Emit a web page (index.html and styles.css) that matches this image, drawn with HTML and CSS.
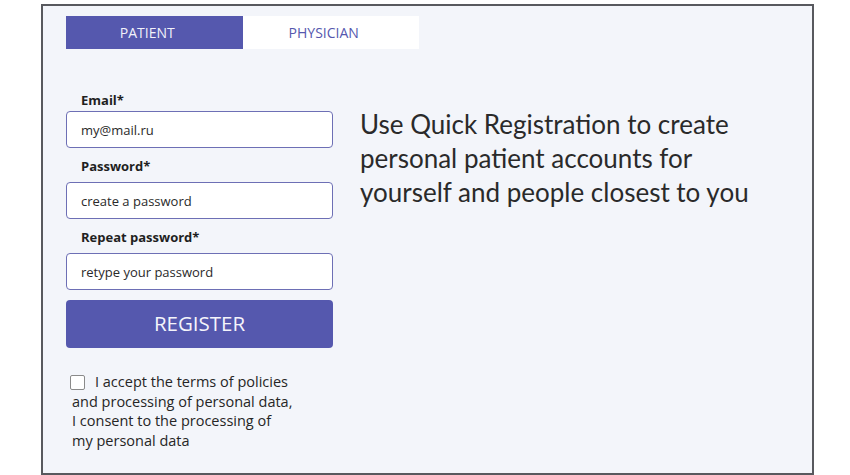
FILE: index.html
```html
<!DOCTYPE html>
<html lang="en">
<head>
<meta charset="utf-8">
<title>Quick Registration</title>
<link rel="stylesheet" href="styles.css">
</head>
<body>
<div class="frame">
  <div class="tabs">
    <div class="tab tab-active">PATIENT</div>
    <div class="tab">PHYSICIAN</div>
  </div>
  <div class="content">
    <form class="form">
      <label class="label label-first">Email*</label>
      <div class="input">my@mail.ru</div>
      <label class="label">Password*</label>
      <div class="input">create a password</div>
      <label class="label">Repeat password*</label>
      <div class="input">retype your password</div>
      <div class="button">REGISTER</div>
      <div class="consent">
        <span class="checkbox"></span>I accept the terms of policies<br>and processing of personal data,<br>I consent to the processing of<br>my personal data
      </div>
    </form>
    <p class="intro">Use Quick Registration to create<br>personal patient accounts for<br>yourself and people closest to you</p>
  </div>
</div>
</body>
</html>
```
FILE: styles.css
```css
html, body {
  margin: 0;
  padding: 0;
  background: #ffffff;
}
body {
  font-family: "Open Sans", "Noto Sans", sans-serif;
  color: #262626;
}
.frame {
  box-sizing: border-box;
  margin: 4px 0 0 41px;
  width: 773px;
  height: 471px;
  border: 2px solid #58595e;
  background: #f3f5fa;
  padding: 10px 0 0 23px;
}
.tabs {
  display: flex;
  width: 353px;
  height: 33px;
}
.tab {
  flex: 1;
  display: flex;
  align-items: center;
  justify-content: center;
  background: #ffffff;
  color: #5558ae;
  font-size: 14px;
  padding-right: 14px;
}
.tab-active {
  background: #5558ae;
  color: #f2f2fa;
}
.content {
  display: flex;
  gap: 27px;
  margin-top: 41px;
}
.form {
  width: 267px;
  display: flex;
  flex-direction: column;
  margin: 0;
}
.label {
  display: block;
  font-size: 13px;
  font-weight: 700;
  line-height: 20px;
  padding-left: 15px;
  color: #1f1f1f;
  margin: 8px 0 6px;
}
.label-first {
  margin: 0 0 1px;
}
.input {
  box-sizing: border-box;
  height: 37px;
  border: 1.5px solid #6d6fb5;
  border-radius: 4px;
  background: #ffffff;
  padding-left: 14px;
  display: flex;
  align-items: center;
  font-size: 13px;
  color: #2a2a2a;
}
.button {
  margin-top: 10px;
  height: 48px;
  border-radius: 4px;
  background: #5558ae;
  color: #f4f4fb;
  font-size: 20.5px;
  display: flex;
  align-items: center;
  justify-content: center;
  padding-bottom: 2px;
  box-sizing: border-box;
}
.consent {
  margin-top: 24px;
  padding-left: 6px;
  font-size: 14.5px;
  line-height: 19.7px;
  color: #262626;
  white-space: nowrap;
}
.checkbox {
  display: inline-block;
  box-sizing: border-box;
  width: 15px;
  height: 15px;
  border: 1px solid #8a8a8a;
  border-radius: 2px;
  background: #fff;
  vertical-align: -3px;
  margin: 0 10px 0 -2px;
}
.intro {
  margin: 17px 0 0;
  font-family: "Lato", "Open Sans", sans-serif;
  font-size: 26px;
  line-height: 34px;
  color: #2a2a2a;
  white-space: nowrap;
}
```
